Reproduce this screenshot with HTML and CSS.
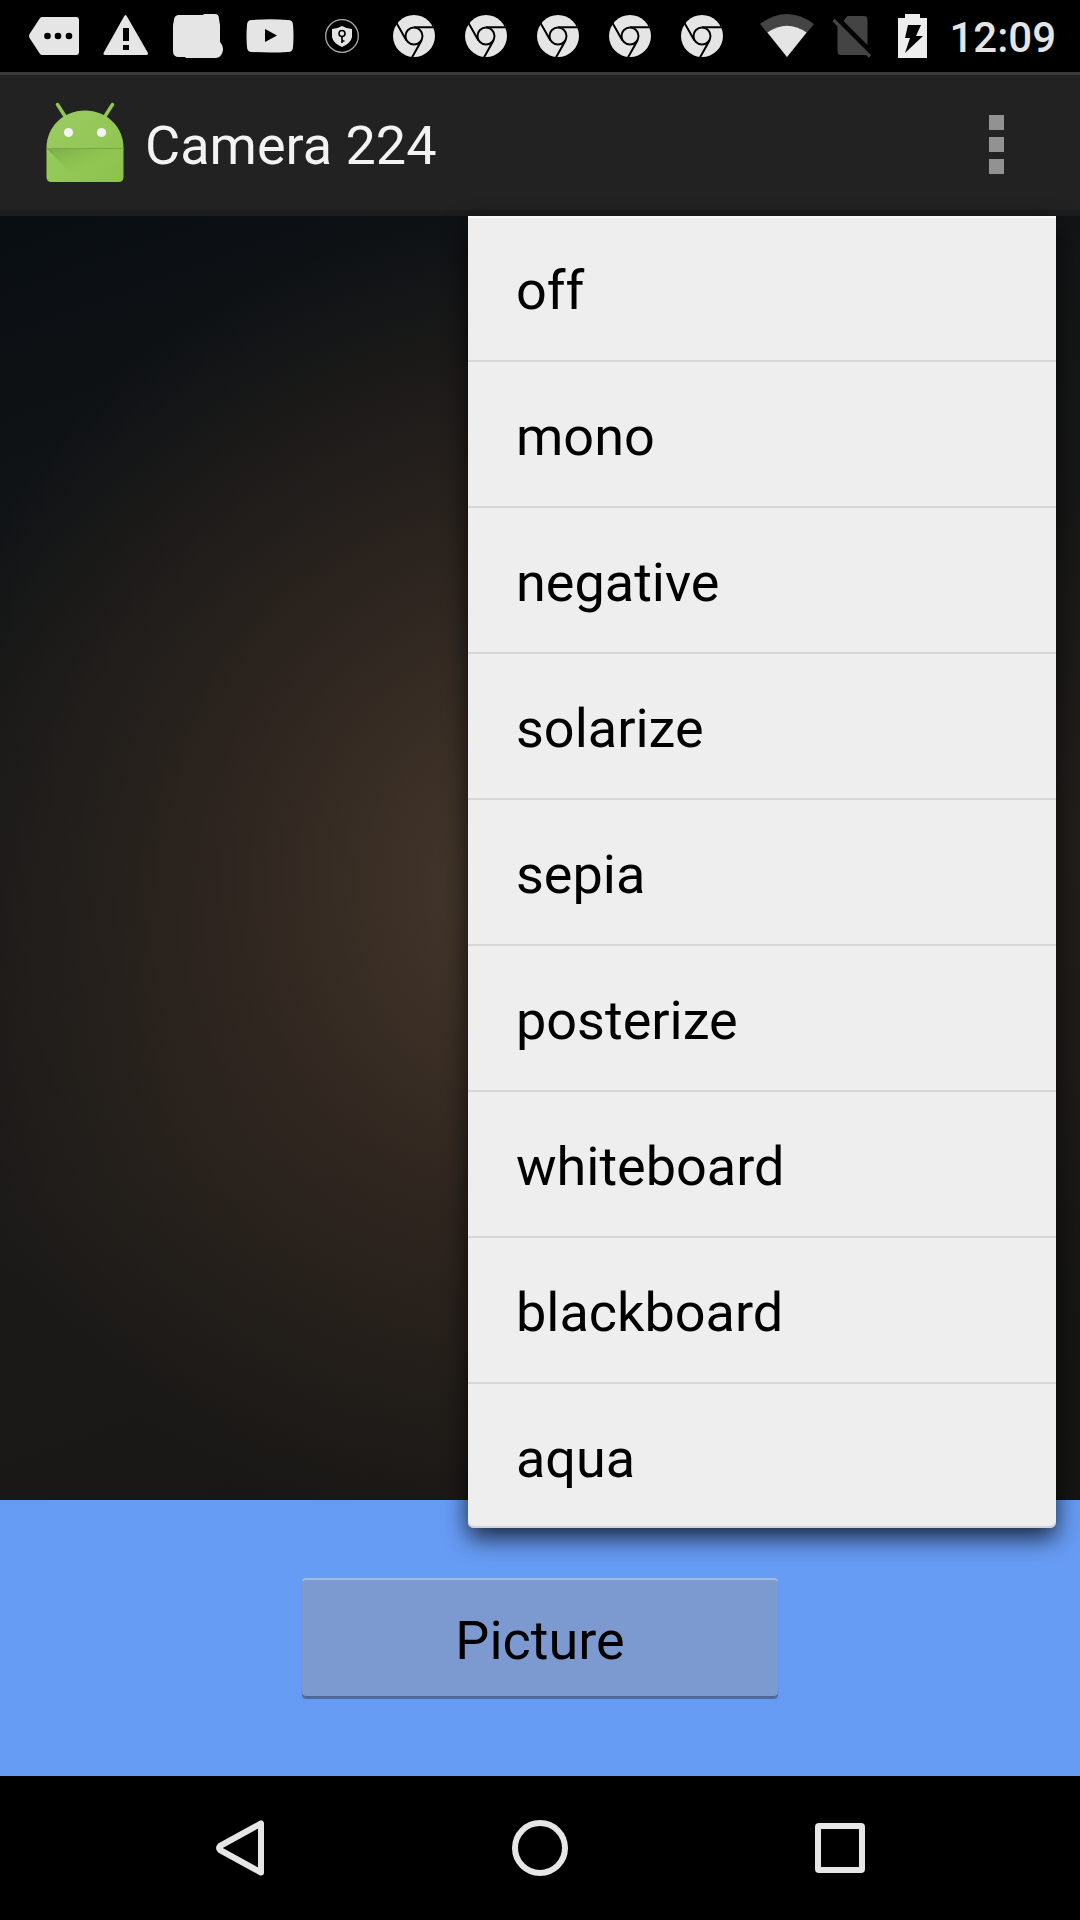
FILE: index.html
```html
<!DOCTYPE html>
<html lang="en">
<head>
<meta charset="utf-8">
<meta name="viewport" content="width=device-width, initial-scale=1">
<title>Camera 224</title>
<link rel="stylesheet" href="styles.css">
</head>
<body>
<svg class="defs" aria-hidden="true">
  <symbol id="chrome" viewBox="0 0 72 72">
    <circle cx="36" cy="36" r="21" fill="#e5e5e5"/>
    <g fill="none" stroke="#000" stroke-width="2">
      <circle cx="36" cy="36" r="8.500"/>
      <path d="M36 27.300H57M28.300 40.200L18.500 23M43.600 40.200L34 57.500"/>
    </g>
  </symbol>
</svg>

<div class="status">
  <div class="notifications">
    <svg class="note" viewBox="0 0 72 72"><path fill="#e5e5e5" d="M24 17H58q3 0 3 3V52q0 3-3 3H24q-1 0-2-1L11.500 38q-1-2 0-4L22 18q1-1 2-1z"/><g><circle cx="29.500" cy="36" r="3.300"/><circle cx="40" cy="36" r="3.300"/><circle cx="51" cy="36" r="3.300"/></g></svg>
    <svg class="note" viewBox="0 0 72 72"><path fill="#e5e5e5" d="M34 16.500q1.500-3 3 0L58 53q.5 2-1.500 2H15q-2 0-1.500-2z"/><path d="M33 28h6v13h-6zM33 45h6v5h-6z"/></svg>
    <svg class="note" viewBox="0 0 72 72"><path fill="#e5e5e5" d="M16 15H41l1-1H53q4 0 4 5l1 6V42q3 3 3 8-1 7-7 8H24l-1-1H17q-6 0-6-6V25l1-5q0-4 4-5z"/></svg>
    <svg class="note" viewBox="0 0 72 72"><path fill="#e5e5e5" d="M18 20q18-1.500 36 0 5 0 5 5 1 11 0 22 0 5-5 5-18 1-36 0-5 0-5-5-1-11 0-22 0-5 5-5z"/><path d="M31 29v13l12-6.500z"/></svg>
    <svg class="note" viewBox="0 0 72 72"><circle cx="36" cy="36" r="16.300" fill="none" stroke="#aaa" stroke-width="1.300"/><path fill="#e5e5e5" d="M36 26q4 2.500 10 3v8q-1 6-10 10-9-4-10-10v-8q6-.5 10-3z"/><g fill="none" stroke="#000" stroke-width="1.600"><circle cx="36" cy="33.500" r="3"/><path d="M36 37v6M36 41h2.500"/></g></svg>
    <svg class="note" viewBox="0 0 72 72"><use href="#chrome"/></svg>
    <svg class="note" viewBox="0 0 72 72"><use href="#chrome"/></svg>
    <svg class="note" viewBox="0 0 72 72"><use href="#chrome"/></svg>
    <svg class="note" viewBox="0 0 72 72"><use href="#chrome"/></svg>
    <svg class="note" viewBox="0 0 72 72"><use href="#chrome"/></svg>
  </div>
  <div class="system">
    <svg class="wifi" viewBox="0 0 54 72"><path fill="#444" d="M0 24Q27 4 54 24L27 57z"/><path fill="#e5e5e5" d="M7.500 32.500Q27 19 46.500 32.500L27 57z"/></svg>
    <svg class="sim" viewBox="0 0 40 72"><path fill="#444" d="M15.500 16H32q3.500 0 3.500 3.500V45L11.500 21zM5.500 23.500L36 54l-2 1H9q-3.500 0-3.500-3.500z"/><path d="M1.500 20L38 56.500" stroke="#444" stroke-width="3.200"/></svg>
    <svg class="battery" viewBox="0 0 29 72"><path fill="#ededed" d="M7 14h15v4h7v40H0V18h7z"/><path d="M10 25h13l-5 11h7L7 53l5-15H7z"/></svg>
    <time class="clock">12:09</time>
  </div>
</div>

<header class="appbar">
  <svg class="logo" viewBox="0 0 96 96" aria-hidden="true">
    <defs>
      <linearGradient id="shade" x1="0" y1="0" x2="1" y2="1"><stop offset="0" stop-color="#79ab48"/><stop offset=".6" stop-color="#8bc34a" stop-opacity="0"/></linearGradient>
      <linearGradient id="skin" x1="0" y1="0" x2="1" y2="1"><stop offset="0" stop-color="#9ccc65"/><stop offset="1" stop-color="#8bc34a"/></linearGradient>
    </defs>
    <path d="M20.500 8.500L28.500 21M75.500 8.500L67.500 21" stroke="#8fc750" stroke-width="3.500" stroke-linecap="round"/>
    <path fill="url(#skin)" d="M9.500 52C9.500 31 26 14.500 48 14.500S86.500 31 86.500 52V81q0 5-5 5h-67q-5 0-5-5z"/>
    <path fill="url(#shade)" d="M10 53H86L60 86H43z"/>
    <path d="M10 52.500H86.500" stroke="#78a944"/>
    <circle cx="31.500" cy="36.500" r="4.600" fill="#f3f3f3"/><circle cx="64.500" cy="36.500" r="4.600" fill="#f3f3f3"/>
  </svg>
  <h1 class="title">Camera 224</h1>
  <button class="overflow" type="button" aria-label="More options" aria-expanded="true"><i></i><i></i><i></i></button>
  <ul class="menu">
    <li><button type="button">off</button></li>
    <li><button type="button">mono</button></li>
    <li><button type="button">negative</button></li>
    <li><button type="button">solarize</button></li>
    <li><button type="button">sepia</button></li>
    <li><button type="button">posterize</button></li>
    <li><button type="button">whiteboard</button></li>
    <li><button type="button">blackboard</button></li>
    <li><button type="button">aqua</button></li>
  </ul>
</header>

<main class="preview"></main>

<section class="controls">
  <button class="picture" type="button">Picture</button>
</section>

<nav class="navbar">
  <button type="button" aria-label="Back"><svg viewBox="0 0 60 60"><path d="M51 5.500V54.500L10 32q-2-2 0-4z"/></svg></button>
  <button type="button" aria-label="Home"><svg viewBox="0 0 60 60"><circle cx="30" cy="30" r="25"/></svg></button>
  <button type="button" aria-label="Recent apps"><svg viewBox="0 0 60 60"><rect x="8" y="8" width="44" height="44" rx="1"/></svg></button>
</nav>
</body>
</html>
```
FILE: styles.css
```css
* {
  box-sizing: border-box;
}

body {
  margin: 0;
  min-height: 100vh;
  display: flex;
  flex-direction: column;
  background: #000;
  font-family: Roboto, "Liberation Sans", sans-serif;
  font-size: 54px;
  line-height: 64px;
}

button {
  margin: 0;
  padding: 0;
  border: 0;
  background: none;
  color: inherit;
  font: inherit;
}

svg {
  display: block;
}

.defs {
  position: absolute;
  width: 0;
  height: 0;
}

/* Status bar */
.status {
  display: flex;
  justify-content: space-between;
  height: 72px;
  padding: 0 24px 0 18px;
  overflow: hidden;
}

.notifications,
.system {
  display: flex;
  align-items: center;
}

.note {
  width: 72px;
  height: 72px;
}

.wifi {
  width: 54px;
  height: 72px;
  margin-right: 18px;
}

.sim {
  width: 40px;
  height: 72px;
  margin-right: 26px;
}

.battery {
  width: 29px;
  height: 72px;
  margin-right: 22px;
}

.clock {
  padding-top: 4px;
  color: #e5e5e5;
  font-size: 42px;
  font-weight: 500;
  line-height: 68px;
}

/* App bar */
.appbar {
  position: relative;
  z-index: 1;
  display: flex;
  align-items: center;
  height: 144px;
  padding-left: 37px;
  background: #222;
  box-shadow: inset 0 3px #3a3a3a, inset 0 -6px #1d1d1d;
}

.logo {
  width: 96px;
  height: 96px;
}

.title {
  flex: 1;
  margin: 0 0 0 12px;
  padding-top: 4px;
  color: #f3f3f3;
  font-size: 54px;
  font-weight: 400;
}

.overflow {
  display: flex;
  flex-direction: column;
  align-items: center;
  justify-content: center;
  gap: 7px;
  width: 168px;
  height: 144px;
}

.overflow i {
  width: 15px;
  height: 15px;
  background: #929292;
}

.menu {
  position: absolute;
  top: 100%;
  right: 24px;
  width: 588px;
  margin: 0;
  padding: 0;
  list-style: none;
  background: #eee;
  border-radius: 0 0 6px 6px;
  box-shadow: 0 10px 24px rgba(0, 0, 0, 0.75), inset 0 -2px #d2d2d2, inset 0 2px #fafafa;
}

.menu li + li {
  border-top: 2px solid #d6d6d6;
}

.menu button {
  display: block;
  width: 100%;
  height: 144px;
  padding: 6px 48px 0;
  color: #000;
  text-align: left;
}

/* Camera */
.preview {
  flex: 1;
  background:
    radial-gradient(ellipse 640px 680px at 50% 52%, rgba(84, 66, 50, 0.8), rgba(72, 52, 40, 0.45) 50%, rgba(50, 40, 30, 0)),
    linear-gradient(160deg, #090e13, #151717 30%, #1b1a18 60%, #151513);
}

.controls {
  display: flex;
  justify-content: center;
  padding: 78px 24px;
  background: #679cf5;
}

.picture {
  width: 476px;
  height: 120px;
  padding-top: 6px;
  background: #7c9ad0;
  border-radius: 4px;
  box-shadow: inset 0 2px #a3b8df, inset 0 -2px #50679a, 0 1px 1px #4c6ca8;
  color: #000;
}

/* Navigation bar */
.navbar {
  display: flex;
  justify-content: center;
  height: 144px;
}

.navbar button {
  flex: 0 1 300px;
  display: flex;
  align-items: center;
  justify-content: center;
}

.navbar svg {
  width: 60px;
  height: 60px;
  fill: none;
  stroke: #e6e6e6;
  stroke-width: 6;
  stroke-linejoin: round;
}
```
